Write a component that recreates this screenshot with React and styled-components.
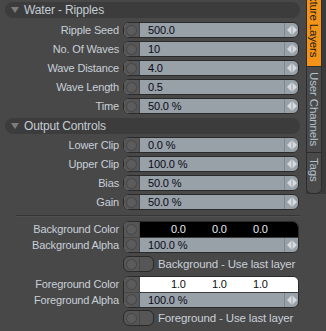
import styled, { createGlobalStyle } from "styled-components";

const Global = createGlobalStyle`
  body {
    margin: 0;
    background: #484848;
  }
`;

const Root = styled.div`
  display: flex;
  width: 326px;
  height: 331px;
  overflow: hidden;
  background: #484848;
  font-family: "Liberation Sans", Arial, sans-serif;
  font-size: 11px;
  letter-spacing: -0.15px;
`;

const Panel = styled.div`
  width: 305px;
  padding-top: 2px;
  display: flex;
  flex-direction: column;
`;

const SectionHeader = styled.div`
  display: flex;
  align-items: center;
  gap: 5px;
  height: 16px;
  margin: ${(p) => (p.first ? "0 5px 4px" : "4px 5px 3px")};
  padding-left: 6px;
  border-radius: 8px;
  background: #3c3c3c;
  color: #c4ccd4;
  font-size: 12px;
`;

const Caret = styled.span`
  width: 0;
  height: 0;
  border-left: 4px solid transparent;
  border-right: 4px solid transparent;
  border-top: 6px solid #7c7c7c;
`;

const Rows = styled.div`
  display: flex;
  flex-direction: column;
  gap: 3px;
`;

const Row = styled.div`
  display: grid;
  grid-template-columns: 119px 176px;
  column-gap: 4px;
  align-items: center;
`;

const Labels = styled.div`
  display: flex;
  flex-direction: column;
`;

const Label = styled.div`
  height: 16px;
  line-height: 16px;
  text-align: right;
  color: #c8d0d8;
  white-space: nowrap;
`;

const Field = styled.div`
  display: flex;
  height: ${(p) => p.h || 16}px;
  box-sizing: border-box;
  border: 1px solid #2a2a2a;
  border-radius: 6px;
  overflow: hidden;
  background: #98a0a8;
`;

const Handle = styled.div`
  width: 15px;
  flex: none;
  display: flex;
  flex-direction: column;
  background: #565656;
  border-right: 1px solid #474747;
`;

const KnobCell = styled.div`
  flex: 1;
  display: flex;
  align-items: center;
  justify-content: center;
  & + & {
    border-top: 1px solid #474747;
  }
`;

const Knob = styled.div`
  width: 11px;
  height: 11px;
  box-sizing: border-box;
  border-radius: 50%;
  border: 1px solid #464646;
  background: #5c5c5c;
`;

const Body = styled.div`
  flex: 1;
  display: flex;
  flex-direction: column;
`;

const Line = styled.div`
  flex: 1;
  display: flex;
  align-items: center;
`;

const Value = styled.div`
  flex: 1;
  padding-left: 8px;
  color: #0a0a18;
`;

const Spinner = styled.div`
  width: 13px;
  align-self: stretch;
  display: flex;
  align-items: center;
  justify-content: center;
  border-left: 1px solid #7e868e;
`;

const Swatch = styled.div`
  flex: 1;
  align-self: stretch;
  display: grid;
  grid-template-columns: repeat(3, 41px);
  align-items: center;
  padding-left: 31px;
  background: ${(p) => p.bg};
  color: ${(p) => p.fg};
  border-bottom: 1px solid #3a3a3a;
`;

const CheckRow = styled.div`
  display: flex;
  align-items: center;
  gap: 4px;
  margin-left: 123px;
  height: 16px;
  color: #c8d0d8;
  font-size: 11.5px;
`;

const CheckBox = styled.div`
  display: flex;
  width: 31px;
  height: 16px;
  box-sizing: border-box;
  border: 1px solid #2a2a2a;
  border-radius: 6px;
  overflow: hidden;
  background: #565656;
`;

const CheckKnob = styled.div`
  width: 15px;
  display: flex;
  align-items: center;
  justify-content: center;
  border-right: 1px solid #474747;
`;

const Separator = styled.div`
  height: 1px;
  margin: 5px 5px 4px 16px;
  background: #363636;
  border-bottom: 1px solid #505050;
`;

const Gap = styled.div`
  height: ${(p) => p.h}px;
`;

const TabColumn = styled.div`
  width: 21px;
  display: flex;
  flex-direction: column;
  align-items: flex-start;
`;

const TabStrip = styled.div`
  display: flex;
  flex-direction: column;
  margin-left: 1px;
  width: 20px;
  height: 194px;
  background: #3a3a3a;
`;

const Tabs = styled.div`
  width: 16px;
  height: 100%;
  box-sizing: border-box;
  border: 1px solid #2c2c2c;
  border-top: none;
  border-radius: 0 0 6px 6px;
  display: flex;
  flex-direction: column;
  overflow: hidden;
  background: #4a4a4a;
`;

const Tab = styled.div`
  height: ${(p) => p.h}px;
  flex: none;
  display: flex;
  flex-direction: column;
  align-items: center;
  justify-content: ${(p) => (p.active ? "flex-end" : "flex-start")};
  padding: ${(p) => (p.active ? "0 0 9px" : "5px 0 0")};
  box-sizing: border-box;
  overflow: hidden;
  background: ${(p) => (p.active ? "#f39419" : "#4a4a4a")};
  color: ${(p) => (p.active ? "#1c1c1c" : "#b4c0cc")};
  border-bottom: 1px solid #2c2c2c;
  font-size: 11.5px;
  &:last-child {
    border-bottom: none;
  }
`;

const TabText = styled.span`
  writing-mode: vertical-rl;
  white-space: nowrap;
`;

const Arrows = () => (
  <svg width="10" height="10" viewBox="0 0 10 10">
    <polygon points="0,5 4,1 4,9" fill="#d6dade" />
    <rect x="4.5" y="0.5" width="1" height="9" fill="#d6dade" />
    <polygon points="10,5 6,1 6,9" fill="#d6dade" />
  </svg>
);

const NumberRow = ({ label, value }) => (
  <Row>
    <Label>{label}</Label>
    <Field>
      <Handle>
        <KnobCell>
          <Knob />
        </KnobCell>
      </Handle>
      <Line>
        <Value>{value}</Value>
        <Spinner>
          <Arrows />
        </Spinner>
      </Line>
    </Field>
  </Row>
);

const ColorRow = ({ name, bg, fg, values }) => (
  <Row>
    <Labels>
      <Label>{name} Color</Label>
      <Label>{name} Alpha</Label>
    </Labels>
    <Field h={32}>
      <Handle>
        <KnobCell>
          <Knob />
        </KnobCell>
        <KnobCell>
          <Knob />
        </KnobCell>
      </Handle>
      <Body>
        <Swatch bg={bg} fg={fg}>
          {values.map((v, i) => (
            <span key={i}>{v}</span>
          ))}
        </Swatch>
        <Line>
          <Value>100.0 %</Value>
          <Spinner>
            <Arrows />
          </Spinner>
        </Line>
      </Body>
    </Field>
  </Row>
);

const Check = ({ text }) => (
  <CheckRow>
    <CheckBox>
      <CheckKnob>
        <Knob />
      </CheckKnob>
    </CheckBox>
    {text}
  </CheckRow>
);

const water = [
  ["Ripple Seed", "500.0"],
  ["No. Of Waves", "10"],
  ["Wave Distance", "4.0"],
  ["Wave Length", "0.5"],
  ["Time", "50.0 %"],
];

const output = [
  ["Lower Clip", "0.0 %"],
  ["Upper Clip", "100.0 %"],
  ["Bias", "50.0 %"],
  ["Gain", "50.0 %"],
];

export default function App() {
  return (
    <Root>
      <Global />
      <Panel>
        <SectionHeader first>
          <Caret />
          Water - Ripples
        </SectionHeader>
        <Rows>
          {water.map(([l, v]) => (
            <NumberRow key={l} label={l} value={v} />
          ))}
        </Rows>
        <SectionHeader>
          <Caret />
          Output Controls
        </SectionHeader>
        <Rows>
          {output.map(([l, v]) => (
            <NumberRow key={l} label={l} value={v} />
          ))}
        </Rows>
        <Separator />
        <ColorRow name="Background" bg="#000" fg="#e8ecf0" values={["0.0", "0.0", "0.0"]} />
        <Gap h={3} />
        <Check text="Background - Use last layer" />
        <Gap h={4} />
        <ColorRow name="Foreground" bg="#fff" fg="#101010" values={["1.0", "1.0", "1.0"]} />
        <Gap h={2} />
        <Check text="Foreground - Use last layer" />
      </Panel>
      <TabColumn>
        <TabStrip>
          <Tabs>
            <Tab active h={67}>
              <TabText>Texture Layers</TabText>
            </Tab>
            <Tab h={86}>
              <TabText>User Channels</TabText>
            </Tab>
            <Tab h={40}>
              <TabText>Tags</TabText>
            </Tab>
          </Tabs>
        </TabStrip>
      </TabColumn>
    </Root>
  );
}
